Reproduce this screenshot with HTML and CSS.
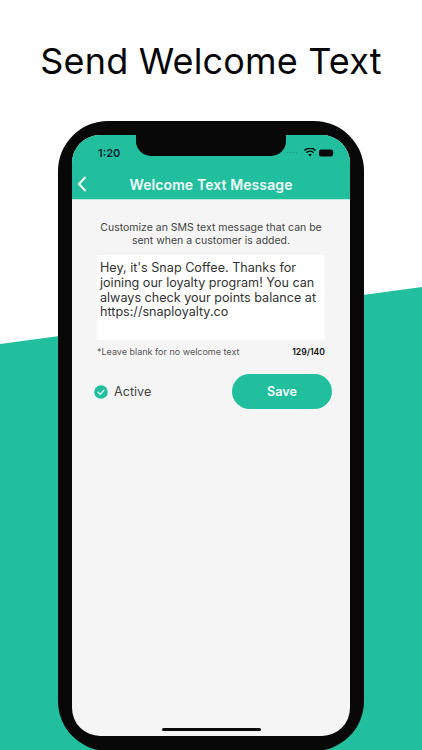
FILE: index.html
```html
<!DOCTYPE html>
<html lang="en">
<head>
<meta charset="utf-8">
<title>Send Welcome Text</title>
<link rel="stylesheet" href="styles.css">
</head>
<body>
<div class="stage">
  <div class="wedge"></div>
  <h1 class="headline">Send Welcome Text</h1>
  <div class="phone">
    <div class="screen">
      <div class="notch"></div>
      <header class="appbar">
        <div class="status">
          <span class="time">1:20</span>
          <div class="status-icons">
            <svg class="signal" width="14" height="3" viewBox="0 0 14 3"><g fill="#1a9c84"><circle cx="1.5" cy="1.5" r=".8"/><circle cx="4.5" cy="1.5" r=".8"/><circle cx="7.5" cy="1.5" r=".8"/><circle cx="10.5" cy="1.5" r=".8"/></g></svg>
            <svg width="12" height="9" viewBox="0 0 12 9"><path d="M6 8.6 4.3 6.6a2.6 2.6 0 0 1 3.4 0ZM2.9 5.2 1.9 4a6.2 6.2 0 0 1 8.2 0l-1 1.2a4.6 4.6 0 0 0-6.2 0ZM.9 2.9 0 1.8a9 9 0 0 1 12 0l-.9 1.1a7.6 7.6 0 0 0-10.2 0Z" fill="#0a0a0a"/></svg>
            <svg width="16" height="8" viewBox="0 0 16 8"><rect x="0" y=".5" width="14" height="7" rx="2" fill="#0a0a0a"/><rect x="14.6" y="2.8" width="1" height="2.4" rx=".5" fill="#1a9c84"/></svg>
          </div>
        </div>
        <div class="titlebar">
          <svg class="back" width="10" height="16" viewBox="0 0 10 16"><path d="M8 1.5 2 8l6 6.5" fill="none" stroke="#fff" stroke-width="2" stroke-linecap="round" stroke-linejoin="round"/></svg>
          <span class="bartitle">Welcome Text Message</span>
        </div>
      </header>
      <main class="content">
        <p class="intro">Customize an SMS text message that can be sent when a customer is added.</p>
        <div class="msgbox">Hey, it's Snap Coffee. Thanks for joining our loyalty program! You can always check your points balance at https://snaployalty.co</div>
        <div class="hintrow">
          <span class="hint">*Leave blank for no welcome text</span>
          <span class="count">129/140</span>
        </div>
        <div class="actions">
          <div class="active">
            <svg width="14" height="14" viewBox="0 0 14 14"><circle cx="7" cy="7" r="6.8" fill="#22bf9f"/><path d="M4 7.2 6.2 9.3 10 5.2" fill="none" stroke="#fff" stroke-width="1.2" stroke-linecap="round" stroke-linejoin="round"/></svg>
            <span>Active</span>
          </div>
          <button class="save" type="button">Save</button>
        </div>
      </main>
      <div class="homebar"></div>
    </div>
  </div>
</div>
</body>
</html>
```
FILE: styles.css
```css
* { box-sizing: border-box; }
html, body { margin: 0; padding: 0; }
body { width: 422px; height: 750px; overflow: hidden; background: #fff; font-family: Inter, "Open Sans", sans-serif; }
.stage { position: relative; width: 422px; height: 750px; overflow: hidden; background: #fff; }
.wedge { position: absolute; inset: 0; background: #22bf9f; clip-path: polygon(0 344px, 422px 287px, 422px 750px, 0 750px); }
.headline { position: relative; margin: 0; padding-top: 40px; height: 121px; text-align: center; font-size: 36px; line-height: 42px; font-weight: 400; color: #050505; letter-spacing: .18px; }
.phone { position: relative; width: 306px; height: 630px; margin-left: 58px; padding: 14px; background: #080808; border-radius: 50px; }
.screen { position: relative; height: 601px; border-radius: 28px; overflow: hidden; background: #f5f5f5; display: flex; flex-direction: column; }
.notch { position: absolute; top: 0; left: 64px; width: 150px; height: 21px; background: #080808; border-radius: 0 0 15px 15px; }
.appbar { height: 65px; background: #22bf9f; border-bottom: 1px solid #bfe9de; flex: none; }
.status { height: 34px; display: flex; justify-content: space-between; align-items: center; padding: 1px 15px 0 26px; }
.time { font-size: 11px; font-weight: 600; color: #123; }
.status-icons { display: flex; align-items: center; gap: 3px; }
.signal { margin-right: 1px; }
.titlebar { position: relative; height: 30px; display: flex; align-items: center; justify-content: center; }
.back { position: absolute; left: 5px; top: 7px; }
.bartitle { font-size: 14px; font-weight: 600; color: #f2fbf9; letter-spacing: .1px; }
.content { padding: 22px 25px 0; display: flex; flex-direction: column; }
.intro { margin: 0 -3px; font-size: 10.5px; line-height: 12.5px; text-align: center; color: #444; }
.msgbox { margin-top: 8px; height: 85px; background: #fff; padding: 6px 1px 0 3px; font-size: 12.6px; line-height: 14.8px; color: #333; }
.hintrow { display: flex; justify-content: space-between; align-items: center; height: 22px; padding-top: 1px; }
.hint { font-size: 9px; color: #555; }
.count { font-size: 8.6px; font-weight: 600; color: #111; }
.actions { display: flex; align-items: center; justify-content: space-between; margin: 12px -7px 0 -3px; }
.active { display: flex; align-items: center; gap: 6px; font-size: 12.6px; color: #444; }
.save { width: 100px; height: 35px; border: 0; border-radius: 18px; background: #22bf9f; color: #f4fcfa; font: 600 12.6px Inter, "Open Sans", sans-serif; }
.homebar { position: absolute; left: 90px; bottom: 5px; width: 99px; height: 3px; background: #0a0a0a; border-radius: 2px; }
```
